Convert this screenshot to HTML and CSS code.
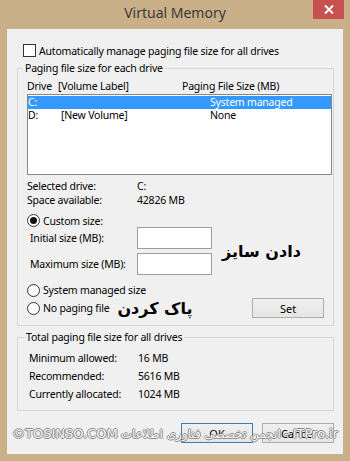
FILE: index.html
```html
<!DOCTYPE html>
<html>
<head>
    <title>Virtual Memory</title>
    <meta charset="utf-8">
    <link rel="stylesheet" href="styles.css">
</head>
<body>
<div class="window">
    <div class="titlebar">
        <span class="title">Virtual Memory</span>
        <span class="close">
            <svg width="10" height="9" viewBox="0 0 10 9"><path d="M1 0.5 L9 8.5 M9 0.5 L1 8.5" stroke="#fff" stroke-width="2"/></svg>
        </span>
    </div>
    <div class="client">
        <div class="check-row"><span class="checkbox"></span>Automatically manage paging file size for all drives</div>

        <fieldset class="group drives">
            <legend>Paging file size for each drive</legend>
            <div class="list-head"><span class="h1">Drive</span><span class="h2">[Volume Label]</span><span>Paging File Size (MB)</span></div>
            <div class="listbox">
                <div class="list-row selected"><span class="c1">C:</span><span class="c2"></span><span>System managed</span></div>
                <div class="list-row"><span class="c1">D:</span><span class="c2">[New Volume]</span><span>None</span></div>
            </div>
            <div class="info">
                <span>Selected drive:</span><span>C:</span>
                <span>Space available:</span><span>42826 MB</span>
            </div>
            <div class="radio-row custom"><span class="radio checked"></span>Custom size:</div>
            <div class="sizes">
                <div class="fields">
                    <div class="field"><span class="field-label">Initial size (MB):</span><span class="textbox"></span></div>
                    <div class="field"><span class="field-label">Maximum size (MB):</span><span class="textbox"></span></div>
                </div>
                <div class="note">دادن سایز</div>
            </div>
            <div class="radio-row system"><span class="radio"></span>System managed size</div>
            <div class="radio-row nopage"><span class="radio"></span>No paging file<span class="note">پاک کردن</span><button class="btn set">Set</button></div>
        </fieldset>

        <fieldset class="group totals">
            <legend>Total paging file size for all drives</legend>
            <div class="total-row"><span>Minimum allowed:</span><span>16 MB</span></div>
            <div class="total-row"><span>Recommended:</span><span>5616 MB</span></div>
            <div class="total-row"><span>Currently allocated:</span><span>1024 MB</span></div>
        </fieldset>

        <div class="buttons">
            <button class="btn default">OK</button>
            <button class="btn">Cancel</button>
        </div>

        <div class="watermark">
            <span class="wm-site">©TOSINSO.COM</span>
            <span class="wm-fa" dir="rtl">انجمن تخصصی فناوری اطلاعات</span>
            <span class="wm-site">- ITPro.ir</span>
        </div>
    </div>
</div>
</body>
</html>
```

FILE: styles.css
```css
body {
    margin: 0;
    background: #c9b088;
    font-family: "Noto Sans", "DejaVu Sans", sans-serif;
    font-size: 10.5px;
    letter-spacing: -0.2px;
    color: #000;
}
.window {
    width: 350px;
    height: 461px;
    background: #c9b088;
}
.titlebar {
    position: relative;
    height: 29px;
    display: flex;
    justify-content: center;
}
.title {
    margin-top: 3px;
    font-size: 14px;
    letter-spacing: 0;
    line-height: 20px;
    color: #3a3a3a;
}
.close {
    position: absolute;
    top: 0;
    right: 6px;
    width: 31px;
    height: 19px;
    background: #c75050;
    display: flex;
    align-items: center;
    justify-content: center;
}
.client {
    position: relative;
    margin: 0 7px;
    height: 425px;
    box-sizing: border-box;
    padding: 14px 0 0 10px;
    background: #f0f0f0;
}
.check-row {
    display: flex;
    align-items: center;
    height: 15px;
    padding-left: 6px;
}
.checkbox {
    width: 11px;
    height: 11px;
    border: 1px solid #333;
    background: #fff;
    margin-right: 3px;
}

.group {
    margin: 3px 0 0 0;
    width: 317px;
    box-sizing: border-box;
    border: 1px solid #d6d6d6;
    padding: 0 0 7px 9px;
    min-width: 0;
}
.group legend {
    padding: 0 2px;
    margin-left: -4px;
    line-height: 15px;
}
.list-head {
    display: flex;
    margin-top: 3px;
    line-height: 14px;
}
.list-head .h1 { width: 31px; }
.list-head .h2 { width: 124px; }
.listbox {
    margin-top: 1px;
    width: 305px;
    height: 81px;
    box-sizing: border-box;
    border: 1px solid #828790;
    background: #fff;
    padding-top: 1px;
}
.list-row {
    display: flex;
    height: 13px;
    line-height: 13px;
}
.list-row .c1 { width: 33px; }
.list-row .c2 { width: 149px; }
.list-row.selected {
    background: #3399ff;
    color: #fff;
}
.info {
    display: grid;
    grid-template-columns: 110px auto;
    margin-top: 4px;
    line-height: 14px;
}

.radio-row {
    display: flex;
    align-items: center;
}
.radio {
    width: 11px;
    height: 11px;
    border: 1px solid #333;
    border-radius: 50%;
    background: #fff;
    margin-right: 3px;
    display: flex;
    align-items: center;
    justify-content: center;
}
.radio.checked::after {
    content: "";
    width: 7px;
    height: 7px;
    border-radius: 50%;
    background: #111;
}
.custom {
    margin-top: 7px;
    height: 13px;
}
.sizes {
    display: flex;
    align-items: center;
}
.fields {
    display: flex;
    flex-direction: column;
    gap: 4px;
}
.field {
    display: flex;
    align-items: center;
}
.field-label {
    width: 107px;
    padding-left: 3px;
}
.textbox {
    width: 75px;
    height: 22px;
    box-sizing: border-box;
    border: 1px solid #9d9d9d;
    background: #fff;
}
.note {
    font-family: "DejaVu Sans", sans-serif;
    font-weight: bold;
    font-size: 16px;
    letter-spacing: 0;
    color: #000;
}
.sizes .note {
    margin-left: 10px;
}
.system {
    margin-top: 8px;
    height: 14px;
}
.nopage {
    margin-top: 1px;
    height: 20px;
}
.nopage .note {
    margin-left: 8px;
}
.btn {
    width: 72px;
    height: 20px;
    box-sizing: border-box;
    border: 1px solid #acacac;
    background: linear-gradient(#f0f0f0, #e5e5e5);
    font-family: "Noto Sans", "DejaVu Sans", sans-serif;
    font-size: 11px;
    color: #000;
    padding: 0;
}
.set {
    margin-left: auto;
    margin-right: 9px;
}

.totals {
    margin-top: 4px;
    padding-left: 11px;
}
.totals legend {
    margin-left: -5px;
}
.total-row {
    display: flex;
    line-height: 18px;
}
.total-row span:first-child {
    width: 109px;
}
.totals legend + .total-row {
    margin-top: 4px;
}

.buttons {
    width: 317px;
    display: flex;
    justify-content: flex-end;
    gap: 9px;
    margin-top: 12px;
}
.btn.default {
    border-color: #3c7fb1;
}
.watermark {
    position: absolute;
    left: 5px;
    top: 395px;
    width: 326px;
    display: flex;
    justify-content: space-between;
    align-items: center;
    font-family: "DejaVu Sans", sans-serif;
    line-height: 20px;
    letter-spacing: 0;
    color: #f6f6f6;
    white-space: nowrap;
    text-shadow: 1px 0 #8c8c8c, -1px 0 #8c8c8c, 0 1px #8c8c8c, 0 -1px #8c8c8c;
}
.wm-site {
    font-size: 13px;
}
.wm-fa {
    font-size: 12px;
}
```
